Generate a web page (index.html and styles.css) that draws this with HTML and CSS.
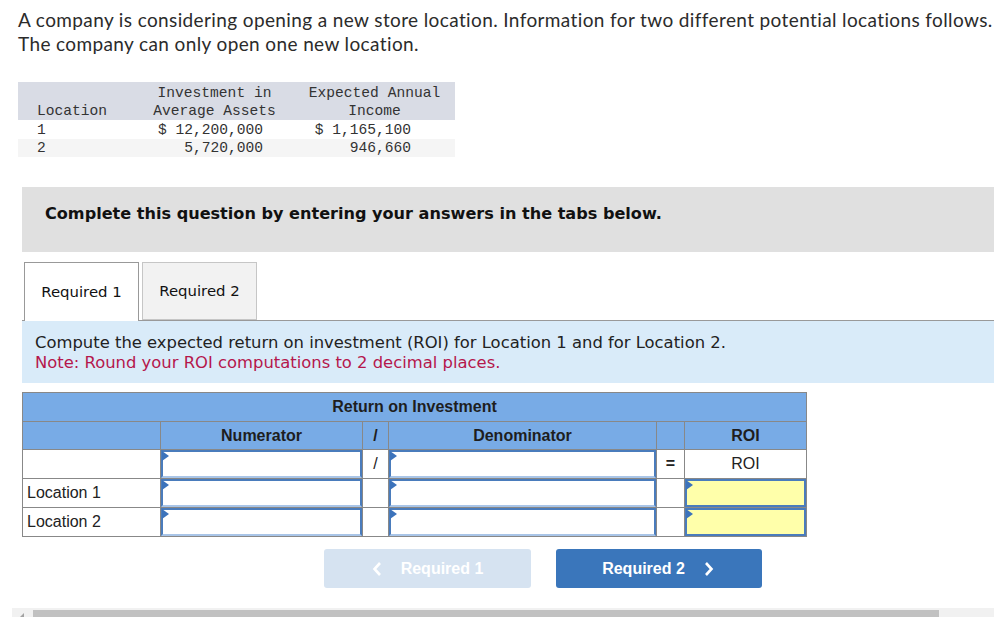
FILE: index.html
```html
<!DOCTYPE html>
<html>
<head>
<meta charset="utf-8">
<link rel="stylesheet" href="styles.css">
</head>
<body>
<p class="intro">A company is considering opening a new store location. Information for two different potential locations follows.<br>The company can only open one new location.</p>

<table class="data">
  <colgroup><col class="dc1"><col class="dc2"><col class="dc3"></colgroup>
  <tr class="data-head">
    <td class="c1 bottom">Location</td>
    <td class="center">Investment in<br>Average Assets</td>
    <td class="center">Expected Annual<br>Income</td>
  </tr>
  <tr class="data-row">
    <td class="c1">1</td>
    <td class="num2">$ 12,200,000</td>
    <td class="num3">$ 1,165,100</td>
  </tr>
  <tr class="data-row alt">
    <td class="c1">2</td>
    <td class="num2">5,720,000</td>
    <td class="num3">946,660</td>
  </tr>
</table>

<div class="instructions">Complete this question by entering your answers in the tabs below.</div>

<div class="tabs">
  <div class="tab active">Required 1</div>
  <div class="tab">Required 2</div>
</div>

<div class="prompt">
  <div>Compute the expected return on investment (ROI) for Location 1 and for Location 2.</div>
  <div class="note">Note: Round your ROI computations to 2 decimal places.</div>
</div>

<table class="roi">
  <colgroup>
    <col class="w1"><col class="w2"><col class="w3"><col class="w4"><col class="w5"><col class="w6">
  </colgroup>
  <tr class="h1"><th colspan="6">Return on Investment</th></tr>
  <tr class="h2"><th></th><th>Numerator</th><th>/</th><th>Denominator</th><th></th><th>ROI</th></tr>
  <tr>
    <td></td>
    <td class="in"><div class="box"></div></td>
    <td class="sym">/</td>
    <td class="in"><div class="box"></div></td>
    <td class="sym eq">=</td>
    <td class="sym">ROI</td>
  </tr>
  <tr>
    <td class="lbl">Location 1</td>
    <td class="in"><div class="box"></div></td>
    <td></td>
    <td class="in"><div class="box"></div></td>
    <td></td>
    <td class="in"><div class="box yellow"></div></td>
  </tr>
  <tr>
    <td class="lbl">Location 2</td>
    <td class="in"><div class="box"></div></td>
    <td></td>
    <td class="in"><div class="box"></div></td>
    <td></td>
    <td class="in"><div class="box yellow"></div></td>
  </tr>
</table>

<div class="nav">
  <div class="btn disabled">
    <svg width="10" height="16" viewBox="0 0 10 16"><path d="M8 2 L2.5 8 L8 14" fill="none" stroke="#fff" stroke-width="2.6"/></svg>
    <span>Required 1</span>
  </div>
  <div class="btn primary">
    <span>Required 2</span>
    <svg width="10" height="16" viewBox="0 0 10 16"><path d="M2 2 L7.5 8 L2 14" fill="none" stroke="#fff" stroke-width="2.6"/></svg>
  </div>
</div>

<div class="hscroll">
  <div class="arrow"></div>
  <div class="thumb"></div>
</div>
</body>
</html>
```

FILE: styles.css
```css
html, body {
  margin: 0;
  padding: 0;
  overflow: hidden;
  background: #fff;
}
body {
  width: 994px;
  height: 617px;
  font-family: "DejaVu Sans", Verdana, sans-serif;
  color: #222;
}
.intro {
  margin: 0;
  padding: 8px 0 0 18px;
  font-family: Lato, "Open Sans", sans-serif;
  font-size: 19px;
  letter-spacing: 0.38px;
  line-height: 24px;
  white-space: nowrap;
  color: #2b2b2b;
}
.data {
  margin: 26px 0 0 18px;
  border-collapse: collapse;
  table-layout: fixed;
  width: 437px;
  font-family: "Liberation Mono", "DejaVu Sans Mono", monospace;
  font-size: 14.6px;
  color: #333;
}
.dc1 { width: 117px; }
.dc2 { width: 159px; }
.dc3 { width: 161px; }
.data td {
  padding: 1px 0 0 0;
  vertical-align: top;
  white-space: nowrap;
  box-sizing: border-box;
}
.data-head td {
  background: #d9dce5;
  height: 38px;
  padding-top: 2px;
  line-height: 18px;
}
.data-head td.bottom { vertical-align: bottom; padding: 0 0 0 19px; }
.data-row td { height: 19px; line-height: 18px; }
.data-row.alt td { background: #f5f5f5; height: 18px; line-height: 17px; }
.c1 { padding-left: 19px !important; }
.center { text-align: center; }
.num2 { text-align: right; padding-right: 31px !important; }
.num3 { text-align: right; padding-right: 44px !important; }

.instructions {
  margin: 30px 0 0 22px;
  height: 65px;
  box-sizing: border-box;
  padding: 17px 0 0 23px;
  background: #e0e0e0;
  font-weight: bold;
  font-size: 16.1px;
  line-height: 20px;
  color: #111;
}
.tabs {
  margin: 10px 0 0 22px;
  padding-left: 2px;
  height: 58px;
  display: flex;
  gap: 3px;
  border-bottom: 1px solid #999;
}
.tab {
  width: 115px;
  height: 58px;
  box-sizing: border-box;
  border: 1px solid #c6c6c6;
  background: #f2f2f2;
  display: flex;
  align-items: center;
  justify-content: center;
  font-size: 14.9px;
  color: #111;
}
.tab.active {
  height: 59px;
  border-color: #999;
  border-bottom: none;
  background: #fff;
  padding-bottom: 1px;
}
.prompt {
  margin-left: 22px;
  height: 62px;
  box-sizing: border-box;
  padding: 12px 0 0 13px;
  background: #d9ebf9;
  font-size: 16.4px;
  line-height: 19.5px;
  color: #222;
}
.note { color: #b5174c; }

.roi {
  margin: 9px 0 0 22px;
  border-collapse: collapse;
  table-layout: fixed;
  width: 784px;
  font-family: "Liberation Sans", Arial, sans-serif;
  font-size: 16px;
  color: #222;
}
.w1 { width: 138px; }
.w2 { width: 202px; }
.w3 { width: 26px; }
.w4 { width: 268px; }
.w5 { width: 28px; }
.w6 { width: 122px; }
.roi th, .roi td {
  border: 1px solid #888;
  padding: 0;
  height: 28px;
}
.roi th {
  background: #78abe6;
  font-weight: bold;
  color: #1e1e1e;
}
.roi tr.h2 th { height: 27px; }
.roi td.sym { text-align: center; }
.roi td.eq { font-weight: bold; }
.roi td.lbl { padding-left: 4px; }
.roi td.in { vertical-align: top; }
.box {
  position: relative;
  height: 28px;
  box-sizing: border-box;
  border: 2px solid #4a7cbc;
  border-bottom-color: #a9c5e8;
  background: #fff;
}
.box.yellow {
  background: #ffffaa;
  border-bottom-color: #4a7cbc;
}
.box::before {
  content: "";
  position: absolute;
  left: -1px;
  top: -1px;
  border-left: 7px solid #3c73bb;
  border-top: 5px solid transparent;
  border-bottom: 5px solid transparent;
}

.nav {
  margin-top: 12px;
  padding-left: 324px;
  display: flex;
  gap: 25px;
}
.btn {
  height: 39px;
  border-radius: 3px;
  display: flex;
  align-items: center;
  justify-content: center;
  gap: 19px;
  font-family: "Liberation Sans", Arial, sans-serif;
  font-weight: bold;
  font-size: 16px;
  color: #fff;
}
.btn.disabled { width: 207px; background: #d6e3f1; }
.btn.primary { width: 206px; background: #3a76bb; padding-right: 2px; box-sizing: border-box; }
.btn svg { display: block; }

.hscroll {
  margin: 20px 0 0 12px;
  height: 10px;
  background: #f1f1f1;
  position: relative;
}
.hscroll .thumb {
  position: absolute;
  left: 21px;
  top: 2px;
  width: 906px;
  height: 8px;
  background: #c1c1c1;
}
.hscroll .arrow {
  position: absolute;
  left: 8px;
  top: 5px;
  border-right: 4px solid #a3a3a3;
  border-top: 4px solid transparent;
}
```
